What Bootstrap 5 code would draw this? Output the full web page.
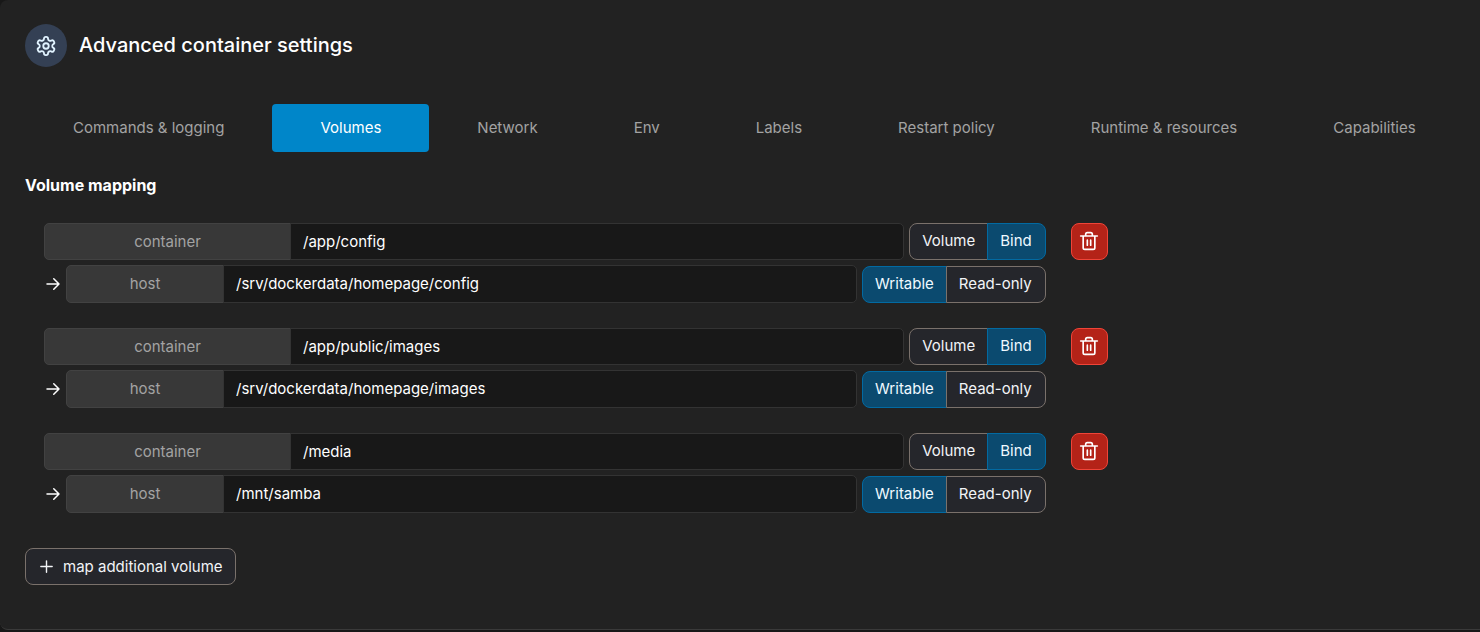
<!DOCTYPE html>
<html lang="en" data-bs-theme="dark">
<head>
<meta charset="utf-8">
<meta name="viewport" content="width=device-width, initial-scale=1">
<title>Advanced container settings</title>
<link href="https://cdn.jsdelivr.net/npm/bootstrap@5.3.0/dist/css/bootstrap.min.css" rel="stylesheet">
<style>
  body { background: #181818; color: #fff; font-family: Inter, "Liberation Sans", sans-serif; font-size: 15px; line-height: 21px; }
  .settings-panel { background: #222; border: solid #3a3a3a; border-width: 0 0 1px; border-radius: 8px 0 0 8px; padding: 24px 5px 44px 25px; }
  .panel-icon { width: 42px; height: 43px; background: #344054; color: #e0f2fe; }
  .panel-title { font-size: 20px; line-height: 28px; font-weight: 500; padding-bottom: 2px; }
  .settings-tabs { margin-top: 37px; margin-bottom: 22px; }
  .settings-tabs .nav-link { padding: 13px 48px; line-height: 22px; color: #a3a3a3; border-radius: 4px; white-space: nowrap; }
  .settings-tabs .nav-link.active { background: #0086c9; color: #fff; }
  .section-title { font-size: 16px; line-height: 22px; font-weight: 700; margin-bottom: 27px; }
  .mapping-list { display: grid; gap: 25px; padding-left: 19px; margin-bottom: 35px; }
  .mapping-fields { display: grid; gap: 5px; flex: 0 0 70%; }
  .mapping-line { display: flex; gap: 5px; }
  .mapping-line .input-group { flex: 1 1 0; min-width: 0; }
  .input-group-text { justify-content: center; background: #383838; border-color: #424242; color: #a3a3a3; font-size: 15px; line-height: 21px; border-radius: 5px; padding: 7px 12px; }
  .container-label { width: 247px; }
  .host-label { width: 158px; }
  .input-group .form-control { background: #181818; border-color: #333; color: #fff; font-size: 15px; line-height: 21px; border-radius: 5px; padding: 7px 12px; }
  .host-line .form-control, .host-line .input-group-text { line-height: 22px; }
  .line-arrow { width: 17px; }
  .btn { --bs-btn-font-size: 15px; --bs-btn-line-height: 21px; --bs-btn-padding-y: 7px; --bs-btn-padding-x: 12px; --bs-btn-border-radius: 8px; height: 37px; align-self: end; padding-top: 6px; }
  .btn-plain { --bs-btn-color: #f2f4f7; --bs-btn-bg: #25262b; --bs-btn-border-color: #7a716b; --bs-btn-hover-color: #fff; --bs-btn-hover-bg: #33343a; --bs-btn-hover-border-color: #7a716b; --bs-btn-active-color: #f0f9ff; --bs-btn-active-bg: #0b4a6f; --bs-btn-active-border-color: #026aa2; }
  .btn-group > .btn-plain:last-child { padding-right: 13px; z-index: 2; }
  .btn-remove { --bs-btn-color: #fff; --bs-btn-bg: #b42318; --bs-btn-border-color: #f04438; --bs-btn-hover-color: #fff; --bs-btn-hover-bg: #912018; --bs-btn-hover-border-color: #f04438; width: 37px; padding: 0 0 1px; margin-left: 25px; align-self: start; }
  .line-icon { fill: none; stroke: currentColor; stroke-width: 2; stroke-linecap: round; stroke-linejoin: round; flex: none; }
</style>
</head>
<body>
<svg class="d-none" aria-hidden="true">
  <symbol id="icon-trash" viewBox="0 0 24 24"><path d="M2 6h20M19 6v14a2 2 0 0 1-2 2H7a2 2 0 0 1-2-2V6M8 6V4a2 2 0 0 1 2-2h4a2 2 0 0 1 2 2v2M10 11v6M14 11v6"/></symbol>
  <symbol id="icon-arrow" viewBox="0 0 24 24"><path d="M4 12h16M13 5l7 7-7 7"/></symbol>
</svg>
<main class="settings-panel">
  <header class="d-flex align-items-center gap-2">
    <span class="panel-icon rounded-circle d-flex align-items-center justify-content-center me-1">
      <svg class="line-icon" width="22" height="22" viewBox="0 0 24 24" aria-hidden="true"><path d="M12.22 2h-.44a2 2 0 0 0-2 2v.18a2 2 0 0 1-1 1.73l-.43.25a2 2 0 0 1-2 0l-.15-.08a2 2 0 0 0-2.73.73l-.22.38a2 2 0 0 0 .73 2.73l.15.1a2 2 0 0 1 1 1.72v.51a2 2 0 0 1-1 1.74l-.15.09a2 2 0 0 0-.73 2.73l.22.38a2 2 0 0 0 2.73.73l.15-.08a2 2 0 0 1 2 0l.43.25a2 2 0 0 1 1 1.73V20a2 2 0 0 0 2 2h.44a2 2 0 0 0 2-2v-.18a2 2 0 0 1 1-1.73l.43-.25a2 2 0 0 1 2 0l.15.08a2 2 0 0 0 2.73-.73l.22-.39a2 2 0 0 0-.73-2.73l-.15-.08a2 2 0 0 1-1-1.74v-.5a2 2 0 0 1 1-1.74l.15-.09a2 2 0 0 0 .73-2.73l-.22-.38a2 2 0 0 0-2.73-.73l-.15.08a2 2 0 0 1-2 0l-.43-.25a2 2 0 0 1-1-1.73V4a2 2 0 0 0-2-2z"/><circle cx="12" cy="12" r="3"/></svg>
    </span>
    <h1 class="panel-title mb-0">Advanced container settings</h1>
  </header>

  <nav class="nav nav-pills settings-tabs" aria-label="Container settings">
    <a class="nav-link" href="#commands">Commands &amp; logging</a>
    <a class="nav-link active" aria-current="page" href="#volumes">Volumes</a>
    <a class="nav-link" href="#network">Network</a>
    <a class="nav-link" href="#env">Env</a>
    <a class="nav-link" href="#labels">Labels</a>
    <a class="nav-link" href="#restart">Restart policy</a>
    <a class="nav-link" href="#runtime">Runtime &amp; resources</a>
    <a class="nav-link" href="#capabilities">Capabilities</a>
  </nav>

  <h2 class="section-title">Volume mapping</h2>

  <form>
    <div class="mapping-list">
      <div class="d-flex">
        <div class="mapping-fields">
          <div class="mapping-line">
            <div class="input-group">
              <label class="input-group-text container-label" for="container1">container</label>
              <input class="form-control" type="text" id="container1" value="/app/config">
            </div>
            <div class="btn-group" role="group" aria-label="Mapping type">
              <input class="btn-check" type="radio" name="type1" id="volume1"><label class="btn btn-plain" for="volume1">Volume</label>
              <input class="btn-check" type="radio" name="type1" id="bind1" checked><label class="btn btn-plain" for="bind1">Bind</label>
            </div>
          </div>
          <div class="mapping-line host-line">
            <span class="line-arrow d-flex align-items-center"><svg class="line-icon" width="18" height="18" aria-hidden="true"><use href="#icon-arrow"/></svg></span>
            <div class="input-group">
              <label class="input-group-text host-label" for="host1">host</label>
              <input class="form-control" type="text" id="host1" value="/srv/dockerdata/homepage/config">
            </div>
            <div class="btn-group align-items-end" role="group" aria-label="Access">
              <input class="btn-check" type="radio" name="access1" id="writable1" checked><label class="btn btn-plain" for="writable1">Writable</label>
              <input class="btn-check" type="radio" name="access1" id="readonly1"><label class="btn btn-plain" for="readonly1">Read-only</label>
            </div>
          </div>
        </div>
        <button class="btn btn-remove d-flex align-items-center justify-content-center" type="button" aria-label="Remove mapping"><svg class="line-icon" width="20" height="20" aria-hidden="true"><use href="#icon-trash"/></svg></button>
      </div>

      <div class="d-flex">
        <div class="mapping-fields">
          <div class="mapping-line">
            <div class="input-group">
              <label class="input-group-text container-label" for="container2">container</label>
              <input class="form-control" type="text" id="container2" value="/app/public/images">
            </div>
            <div class="btn-group" role="group" aria-label="Mapping type">
              <input class="btn-check" type="radio" name="type2" id="volume2"><label class="btn btn-plain" for="volume2">Volume</label>
              <input class="btn-check" type="radio" name="type2" id="bind2" checked><label class="btn btn-plain" for="bind2">Bind</label>
            </div>
          </div>
          <div class="mapping-line host-line">
            <span class="line-arrow d-flex align-items-center"><svg class="line-icon" width="18" height="18" aria-hidden="true"><use href="#icon-arrow"/></svg></span>
            <div class="input-group">
              <label class="input-group-text host-label" for="host2">host</label>
              <input class="form-control" type="text" id="host2" value="/srv/dockerdata/homepage/images">
            </div>
            <div class="btn-group align-items-end" role="group" aria-label="Access">
              <input class="btn-check" type="radio" name="access2" id="writable2" checked><label class="btn btn-plain" for="writable2">Writable</label>
              <input class="btn-check" type="radio" name="access2" id="readonly2"><label class="btn btn-plain" for="readonly2">Read-only</label>
            </div>
          </div>
        </div>
        <button class="btn btn-remove d-flex align-items-center justify-content-center" type="button" aria-label="Remove mapping"><svg class="line-icon" width="20" height="20" aria-hidden="true"><use href="#icon-trash"/></svg></button>
      </div>

      <div class="d-flex">
        <div class="mapping-fields">
          <div class="mapping-line">
            <div class="input-group">
              <label class="input-group-text container-label" for="container3">container</label>
              <input class="form-control" type="text" id="container3" value="/media">
            </div>
            <div class="btn-group" role="group" aria-label="Mapping type">
              <input class="btn-check" type="radio" name="type3" id="volume3"><label class="btn btn-plain" for="volume3">Volume</label>
              <input class="btn-check" type="radio" name="type3" id="bind3" checked><label class="btn btn-plain" for="bind3">Bind</label>
            </div>
          </div>
          <div class="mapping-line host-line">
            <span class="line-arrow d-flex align-items-center"><svg class="line-icon" width="18" height="18" aria-hidden="true"><use href="#icon-arrow"/></svg></span>
            <div class="input-group">
              <label class="input-group-text host-label" for="host3">host</label>
              <input class="form-control" type="text" id="host3" value="/mnt/samba">
            </div>
            <div class="btn-group align-items-end" role="group" aria-label="Access">
              <input class="btn-check" type="radio" name="access3" id="writable3" checked><label class="btn btn-plain" for="writable3">Writable</label>
              <input class="btn-check" type="radio" name="access3" id="readonly3"><label class="btn btn-plain" for="readonly3">Read-only</label>
            </div>
          </div>
        </div>
        <button class="btn btn-remove d-flex align-items-center justify-content-center" type="button" aria-label="Remove mapping"><svg class="line-icon" width="20" height="20" aria-hidden="true"><use href="#icon-trash"/></svg></button>
      </div>
    </div>

    <button class="btn btn-plain d-flex align-items-center gap-2" type="button">
      <svg class="line-icon" width="17" height="17" viewBox="0 0 24 24" aria-hidden="true"><path d="M12 4v16M4 12h16"/></svg>
      map additional volume
    </button>
  </form>
</main>
<script src="https://cdn.jsdelivr.net/npm/bootstrap@5.3.0/dist/js/bootstrap.bundle.min.js"></script>
</body>
</html>
